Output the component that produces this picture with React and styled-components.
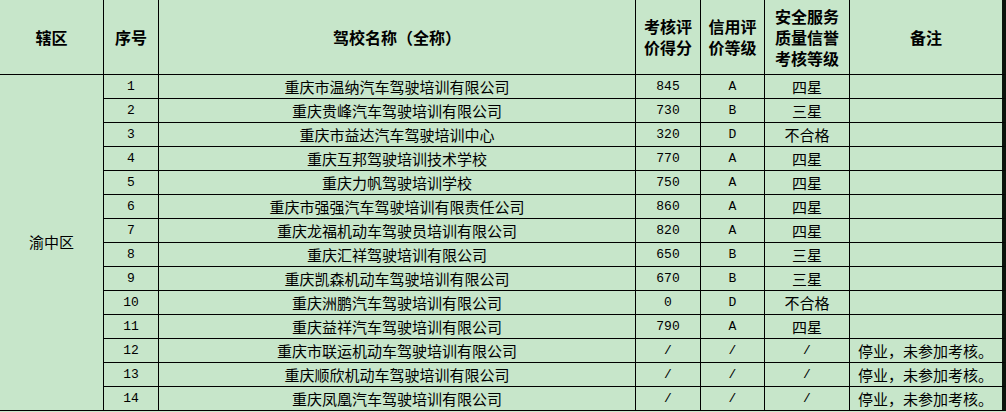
import styled, { createGlobalStyle } from "styled-components";

const GlobalStyle = createGlobalStyle`
  html, body {
    margin: 0;
    padding: 0;
    background: #c7e6ca;
  }
  body {
    font-family: "Noto Sans CJK SC", sans-serif;
    color: #000;
  }
`;

const Sheet = styled.div`
  display: grid;
  grid-template-columns: 104px 55px 477px 65px 64px 85px 156px;
  grid-template-rows: 75px repeat(14, 24px);
  width: 1006px;
  background: #c7e6ca;
`;

const Cell = styled.div`
  box-sizing: border-box;
  display: flex;
  align-items: center;
  justify-content: ${(p) => (p.$left ? "flex-start" : "center")};
  padding-left: ${(p) => (p.$left ? "8px" : "0")};
  border-right: ${(p) => (p.$last ? "4px solid #0c140c" : "1px solid #000")};
  border-bottom: 1px solid #000;
  font-family: ${(p) =>
    p.$mono
      ? '"Liberation Mono", "Noto Sans CJK SC", monospace'
      : '"Noto Sans CJK SC", sans-serif'};
  font-size: ${(p) => (p.$mono ? "13px" : "15px")};
  line-height: 1;
  white-space: nowrap;
`;

const HeadCell = styled(Cell)`
  font-size: 16px;
  font-weight: 700;
  line-height: 21px;
  text-align: center;
  white-space: pre-line;
`;

const DistrictCell = styled(Cell)`
  grid-row: 2 / span 14;
  padding-bottom: 2px;
`;

const schools = [
  ["重庆市温纳汽车驾驶培训有限公司", "845", "A", "四星", ""],
  ["重庆贵峰汽车驾驶培训有限公司", "730", "B", "三星", ""],
  ["重庆市益达汽车驾驶培训中心", "320", "D", "不合格", ""],
  ["重庆互邦驾驶培训技术学校", "770", "A", "四星", ""],
  ["重庆力帆驾驶培训学校", "750", "A", "四星", ""],
  ["重庆市强强汽车驾驶培训有限责任公司", "860", "A", "四星", ""],
  ["重庆龙福机动车驾驶员培训有限公司", "820", "A", "四星", ""],
  ["重庆汇祥驾驶培训有限公司", "650", "B", "三星", ""],
  ["重庆凯森机动车驾驶培训有限公司", "670", "B", "三星", ""],
  ["重庆洲鹏汽车驾驶培训有限公司", "0", "D", "不合格", ""],
  ["重庆益祥汽车驾驶培训有限公司", "790", "A", "四星", ""],
  ["重庆市联运机动车驾驶培训有限公司", "/", "/", "/", "停业，未参加考核。"],
  ["重庆顺欣机动车驾驶培训有限公司", "/", "/", "/", "停业，未参加考核。"],
  ["重庆凤凰汽车驾驶培训有限公司", "/", "/", "/", "停业，未参加考核。"],
];

const headers = [
  "辖区",
  "序号",
  "驾校名称（全称）",
  "考核评\n价得分",
  "信用评\n价等级",
  "安全服务\n质量信誉\n考核等级",
  "备注",
];

export default function App() {
  return (
    <>
      <GlobalStyle />
      <Sheet>
        {headers.map((h, i) => (
          <HeadCell key={h} $last={i === headers.length - 1}>
            {h}
          </HeadCell>
        ))}
        <DistrictCell>渝中区</DistrictCell>
        {schools.map(([name, score, credit, level, note], i) => (
          <Row key={name} n={i + 1} name={name} score={score} credit={credit} level={level} note={note} />
        ))}
      </Sheet>
    </>
  );
}

function Row({ n, name, score, credit, level, note }) {
  const cjk = level !== "/";
  return (
    <>
      <Cell $mono>{n}</Cell>
      <Cell>{name}</Cell>
      <Cell $mono>{score}</Cell>
      <Cell $mono>{credit}</Cell>
      <Cell $mono={!cjk}>{level}</Cell>
      <Cell $left $last>
        {note}
      </Cell>
    </>
  );
}
